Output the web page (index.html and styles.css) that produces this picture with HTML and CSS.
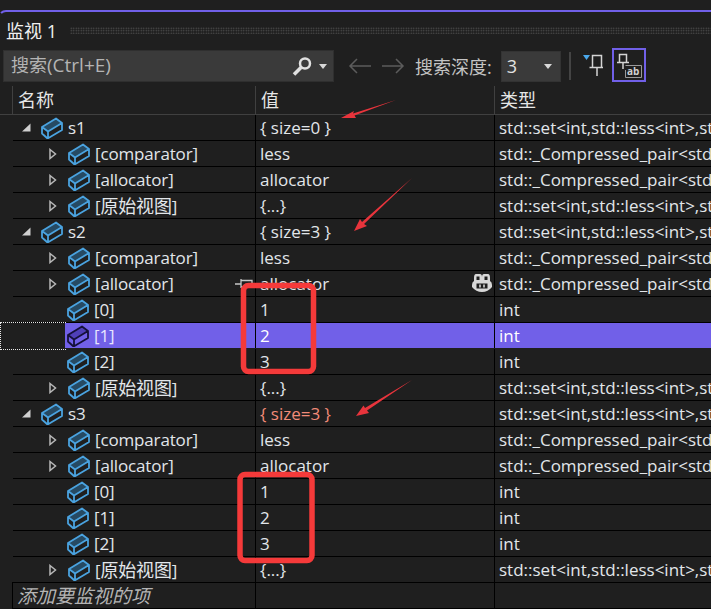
FILE: index.html
```html
<!DOCTYPE html>
<html lang="zh">
<head>
<meta charset="utf-8">
<title>监视 1</title>
<link rel="stylesheet" href="styles.css">
</head>
<body>
<svg class="defs" width="0" height="0">
  <symbol id="cube" viewBox="0 0 22 22">
    <path class="cube-top" d="M1 10 L15 1.500 L21 6 L7 14.500 Z"/>
    <path class="cube-line" d="M1 10 L15 1.500 L21 6 V13 L7.500 21 H6 L1 16.500 Z M1 10 L7 14.500 L21 6 M7 14.500 V21"/>
  </symbol>
  <symbol id="closed" viewBox="0 0 10 12"><path d="M2 1.500 L7.500 6 L2 10.500 Z" fill="#1f1f1f" stroke="#b8b8b8" stroke-width="1.500"/></symbol>
  <symbol id="open" viewBox="0 0 10 10"><path d="M9.500 .5 V8.500 H1 Z" fill="#d0d0d0"/></symbol>
</svg>

<main class="window">
  <div class="tab">
    <div class="title-row">
      <span class="title"><span class="cjk">监视</span> 1</span>
      <span class="grip"></span>
    </div>
    <div class="toolbar">
      <div class="search">
        <span class="search-text"><span class="cjk">搜索</span>(Ctrl+E)</span>
        <svg class="magnifier" width="22" height="22" viewBox="0 0 22 22"><circle cx="14" cy="8.500" r="5" fill="none" stroke="#e0e0e0" stroke-width="2.500"/><path d="M10 12.500 L3 19.500" stroke="#e0e0e0" stroke-width="3.500"/></svg>
        <span class="caret"></span>
      </div>
      <svg class="nav" width="24" height="16" viewBox="0 0 24 16"><path d="M23 8 H2 M9 1 L2 8 L9 15" fill="none" stroke="#5c5c5c" stroke-width="1.500"/></svg>
      <svg class="nav" width="24" height="16" viewBox="0 0 24 16"><path d="M1 8 H22 M15 1 L22 8 L15 15" fill="none" stroke="#5c5c5c" stroke-width="1.500"/></svg>
      <span class="depth-label"><span class="cjk">搜索深度</span>:</span>
      <div class="depth"><span>3</span><span class="caret"></span></div>
      <span class="sep"></span>
      <svg class="pin" width="22" height="26" viewBox="0 0 22 26"><path d="M1 3 H8 L4.500 8 Z" fill="#4aa8ec"/><path d="M10.500 3.500 H19.500 V15.500 H10.500 Z M7.500 15.500 H21 M15 16 V24" fill="none" stroke="#d4d4d4" stroke-width="1.500"/></svg>
      <div class="pin-active">
        <svg width="28" height="28" viewBox="0 0 28 28"><path d="M4.500 3.500 H11.500 V11.500 H4.500 Z M2 11.500 H14 M8 12 V18" fill="none" stroke="#d4d4d4" stroke-width="1.500"/><path d="M10.500 14.500 H26.500 V26.500 H10.500 V19" fill="none" stroke="#9a9a9a"/><text x="12" y="24" class="ab">ab</text></svg>
      </div>
    </div>
    <div class="head">
      <div class="head-cell"><span class="cjk">名称</span></div>
      <div class="head-cell"><span class="cjk">值</span></div>
      <div class="head-cell"><span class="cjk">类型</span></div>
    </div>
    <div class="rows">
      <div class="row"><div class="name lvl0"><span class="arrow"><svg width="10" height="10"><use href="#open"/></svg></span><svg class="cube" width="22" height="22"><use href="#cube"/></svg><span class="label">s1</span></div><div class="val">{ size=0 }</div><div class="type">std::set&lt;int,std::less&lt;int&gt;,std::allocator&lt;int&gt;&gt;</div></div>
      <div class="row"><div class="name lvl1"><span class="arrow"><svg width="10" height="12"><use href="#closed"/></svg></span><svg class="cube" width="22" height="22"><use href="#cube"/></svg><span class="label">[comparator]</span></div><div class="val">less</div><div class="type">std::_Compressed_pair&lt;std::less&lt;int&gt;,std::allocator</div></div>
      <div class="row"><div class="name lvl1"><span class="arrow"><svg width="10" height="12"><use href="#closed"/></svg></span><svg class="cube" width="22" height="22"><use href="#cube"/></svg><span class="label">[allocator]</span></div><div class="val">allocator</div><div class="type">std::_Compressed_pair&lt;std::less&lt;int&gt;,std::allocator</div></div>
      <div class="row"><div class="name lvl1"><span class="arrow"><svg width="10" height="12"><use href="#closed"/></svg></span><svg class="cube" width="22" height="22"><use href="#cube"/></svg><span class="label">[<span class="cjk">原始视图</span>]</span></div><div class="val">{...}</div><div class="type">std::set&lt;int,std::less&lt;int&gt;,std::allocator&lt;int&gt;&gt;</div></div>

      <div class="row"><div class="name lvl0"><span class="arrow"><svg width="10" height="10"><use href="#open"/></svg></span><svg class="cube" width="22" height="22"><use href="#cube"/></svg><span class="label">s2</span></div><div class="val">{ size=3 }</div><div class="type">std::set&lt;int,std::less&lt;int&gt;,std::allocator&lt;int&gt;&gt;</div></div>
      <div class="row"><div class="name lvl1"><span class="arrow"><svg width="10" height="12"><use href="#closed"/></svg></span><svg class="cube" width="22" height="22"><use href="#cube"/></svg><span class="label">[comparator]</span></div><div class="val">less</div><div class="type">std::_Compressed_pair&lt;std::less&lt;int&gt;,std::allocator</div></div>
      <div class="row"><div class="name lvl1"><span class="arrow"><svg width="10" height="12"><use href="#closed"/></svg></span><svg class="cube" width="22" height="22"><use href="#cube"/></svg><span class="label">[allocator]</span><svg class="row-pin" width="20" height="12" viewBox="0 0 20 12"><path d="M1 6 H7 M7 1 V10 M7 2.500 H18 V9 H7" fill="none" stroke="#c8c8c8" stroke-width="1.300"/></svg></div><div class="val val-copilot"><span>allocator</span><svg class="copilot" width="20" height="19" viewBox="0 0 20 19"><path d="M4 1 H8 Q10 1 10 4 Q10 1 12 1 H16 Q18 1 18 5 V8 Q20 9 20 12 V14 Q16 19 10 19 Q4 19 0 14 V12 Q0 9 2 8 V5 Q2 1 4 1 Z" fill="#d8d8d8"/><path d="M4.500 3.500 H7.500 V7 H4.500 Z M12.500 3.500 H15.500 V7 H12.500 Z M4.500 10.500 H15.500 V15.500 H4.500 Z" fill="#1f1f1f"/><path d="M8 11.500 V14.500 M12 11.500 V14.500" stroke="#d8d8d8" stroke-width="1.600"/></svg></div><div class="type">std::_Compressed_pair&lt;std::less&lt;int&gt;,std::allocator</div></div>
      <div class="row"><div class="name lvl2"><svg class="cube" width="22" height="22"><use href="#cube"/></svg><span class="label">[0]</span></div><div class="val">1</div><div class="type">int</div></div>
      <div class="row selected"><div class="name lvl2"><div class="sel"><svg class="cube" width="22" height="22"><use href="#cube"/></svg><span class="label">[1]</span></div></div><div class="val">2</div><div class="type">int</div></div>
      <div class="row"><div class="name lvl2"><svg class="cube" width="22" height="22"><use href="#cube"/></svg><span class="label">[2]</span></div><div class="val">3</div><div class="type">int</div></div>
      <div class="row"><div class="name lvl1"><span class="arrow"><svg width="10" height="12"><use href="#closed"/></svg></span><svg class="cube" width="22" height="22"><use href="#cube"/></svg><span class="label">[<span class="cjk">原始视图</span>]</span></div><div class="val">{...}</div><div class="type">std::set&lt;int,std::less&lt;int&gt;,std::allocator&lt;int&gt;&gt;</div></div>

      <div class="row"><div class="name lvl0"><span class="arrow"><svg width="10" height="10"><use href="#open"/></svg></span><svg class="cube" width="22" height="22"><use href="#cube"/></svg><span class="label">s3</span></div><div class="val changed">{ size=3 }</div><div class="type">std::set&lt;int,std::less&lt;int&gt;,std::allocator&lt;int&gt;&gt;</div></div>
      <div class="row"><div class="name lvl1"><span class="arrow"><svg width="10" height="12"><use href="#closed"/></svg></span><svg class="cube" width="22" height="22"><use href="#cube"/></svg><span class="label">[comparator]</span></div><div class="val">less</div><div class="type">std::_Compressed_pair&lt;std::less&lt;int&gt;,std::allocator</div></div>
      <div class="row"><div class="name lvl1"><span class="arrow"><svg width="10" height="12"><use href="#closed"/></svg></span><svg class="cube" width="22" height="22"><use href="#cube"/></svg><span class="label">[allocator]</span></div><div class="val">allocator</div><div class="type">std::_Compressed_pair&lt;std::less&lt;int&gt;,std::allocator</div></div>
      <div class="row"><div class="name lvl2"><svg class="cube" width="22" height="22"><use href="#cube"/></svg><span class="label">[0]</span></div><div class="val">1</div><div class="type">int</div></div>
      <div class="row"><div class="name lvl2"><svg class="cube" width="22" height="22"><use href="#cube"/></svg><span class="label">[1]</span></div><div class="val">2</div><div class="type">int</div></div>
      <div class="row"><div class="name lvl2"><svg class="cube" width="22" height="22"><use href="#cube"/></svg><span class="label">[2]</span></div><div class="val">3</div><div class="type">int</div></div>
      <div class="row"><div class="name lvl1"><span class="arrow"><svg width="10" height="12"><use href="#closed"/></svg></span><svg class="cube" width="22" height="22"><use href="#cube"/></svg><span class="label">[<span class="cjk">原始视图</span>]</span></div><div class="val">{...}</div><div class="type">std::set&lt;int,std::less&lt;int&gt;,std::allocator&lt;int&gt;&gt;</div></div>
      <div class="row add"><div class="name add-name">添加要监视的项</div><div class="val"></div><div class="type"></div></div>
    </div>
  </div>
</main>

<svg class="marks" width="711" height="609" viewBox="0 0 711 609">
  <path class="arrow-mark" d="M396 100 L353 113.500 L354 111 L341 118 L356 118 L354.500 115.500 Z"/>
  <path class="arrow-mark" d="M412 178 L362 222 L360 219 L354 231 L367 226 L364 224 Z"/>
  <path class="arrow-mark" d="M412 380 L365 408 L363.500 405.500 L356 416 L369 413 L367 410.500 Z"/>
  <rect class="box-mark" x="243.500" y="285.500" width="70" height="86" rx="5"/>
  <rect class="box-mark" x="240" y="474.500" width="72" height="86" rx="5"/>
</svg>
</body>
</html>
```
FILE: styles.css
```css
* { box-sizing: border-box; }
html, body { margin: 0; height: 100%; }
body {
  position: relative;
  width: 711px;
  height: 609px;
  overflow: hidden;
  background: #1f1f1f;
  color: #e2e6ea;
  font-family: "Open Sans", "Noto Sans CJK SC", sans-serif;
  font-size: 17px;
}
.cjk { font-size: 18px; }
.defs { position: absolute; }
.window { height: 609px; padding-top: 10px; }
.tab {
  border-top: 2px solid #7160e8;
  border-left: 2px solid #7160e8;
  border-top-left-radius: 8px;
  border-left-color: transparent;
  margin-left: -2px;
  width: 713px;
  height: 599px;
  display: flex;
  flex-direction: column;
}
.title-row { height: 36px; display: flex; align-items: center; padding: 0 0 1px 6px; flex: none; }
.title { font-size: 18px; color: #f0f0f0; width: 64px; flex: none; }
.grip {
  flex: 1;
  height: 7px;
  margin-top: 2px;
  background-image: radial-gradient(#555 40%, transparent 50%);
  background-size: 2.5px 2.5px;
}
.toolbar { height: 36px; display: flex; align-items: center; flex: none; padding-left: 3px; font-size: 18px; }
.search {
  width: 331px;
  height: 32px;
  background: #3a3a3a;
  border: 1px solid #2f2f2f;
  display: flex;
  align-items: center;
  padding-left: 7px;
}
.search-text { flex: 1; color: #b4b4b4; font-size: 19px; margin-top: -3px; }
.magnifier { margin-right: 6px; }
.caret {
  width: 0; height: 0;
  border-left: 4.5px solid transparent;
  border-right: 4.5px solid transparent;
  border-top: 5px solid #d8d8d8;
  margin-right: 6px;
}
.nav { margin-left: 14px; margin-right: -2px; }
.nav + .nav { margin-left: 11px; }
.depth-label { margin-left: 12px; color: #c4c4c4; }
.depth {
  margin-left: 9px;
  width: 60px;
  height: 31px;
  background: #3a3a3a;
  border: 1px solid #333;
  display: flex;
  align-items: center;
  justify-content: space-between;
  padding-left: 5px;
  color: #e2e2e2;
}
.depth .caret { margin-right: 8px; }
.sep { width: 2px; height: 28px; background: #444; margin-left: 8px; margin-right: 11px; }
.pin { margin-right: 8px; margin-top: -2px; }
.pin-active {
  width: 34px;
  height: 34px;
  border: 2px solid #7160e8;
  display: flex;
  align-items: center;
  justify-content: center;
  margin-top: -2px;
}
.ab { font: bold 10px "Open Sans", sans-serif; fill: #d0d0d0; }
.head {
  height: 29px;
  margin-top: 2px;
  flex: none;
  display: grid;
  grid-template-columns: 243px 239px 1fr;
  padding-left: 12px;
  border-bottom: 1px solid #404040;
}
.head-cell { border-left: 1px solid #404040; padding-left: 5px; line-height: 28px; color: #e6e6e6; }
.rows { flex: 1; padding-left: 13px; overflow: hidden; }
.row {
  position: relative;
  height: 26px;
  display: grid;
  grid-template-columns: 242px 239px 1fr;
  border-bottom: 1px solid #000;
  line-height: 26px;
  white-space: nowrap;
}
.name { display: flex; align-items: center; position: relative; height: 25px; }
.val, .type { border-left: 1px solid #000; padding-left: 4px; overflow: hidden; height: 25px; }
.lvl0 { padding-left: 8px; }
.lvl1 { padding-left: 34px; }
.lvl2 { padding-left: 54px; }
.arrow { width: 20px; display: flex; align-items: center; flex: none; }
.lvl1 .arrow { width: 21px; padding-left: 1px; }
.arrow svg { display: block; }
.cube { flex: none; margin-right: 5px; --top: #264a63; --line: #4aa3e0; }
.cube-top { fill: var(--top); }
.cube-line { fill: none; stroke: var(--line); stroke-width: 1.800; stroke-linejoin: round; }
.label { color: #e2e6ea; margin-top: 1px; letter-spacing: -.15px; }
.changed { color: #f28b78; }
.val-copilot { display: flex; justify-content: space-between; align-items: center; padding-right: 2px; }
.copilot { flex: none; margin-top: -2px; }
.row-pin { position: absolute; right: 1px; top: 7px; }
.selected { border-bottom-color: transparent; }
.selected .val, .selected .type { background: #7160e8; color: #fff; }
.selected::before {
  content: "";
  position: absolute;
  left: -13px;
  top: -1px;
  width: 65px;
  height: 26px;
  border: 1px dotted #e8e8e8;
  border-right: 0;
}
.selected .name { padding-left: 52px; }
.sel { flex: 1; height: 25px; background: #7160e8; display: flex; align-items: center; padding-left: 2px; }
.selected .label { color: #e8e4ff; }
.selected .cube { --top: #4f3fb8; --line: #15103a; }
.add { margin-left: -1px; border-left: 1px solid #000; border-top: 1px solid #000; height: 27px; margin-top: -1px; }
.add-name { padding-left: 4px; font-style: italic; color: #b4b4b4; font-size: 19px; }
.marks { position: absolute; left: 0; top: 0; pointer-events: none; }
.arrow-mark { fill: #e8343c; }
.box-mark { fill: none; stroke: #f53a3a; stroke-width: 5.500; }
```
